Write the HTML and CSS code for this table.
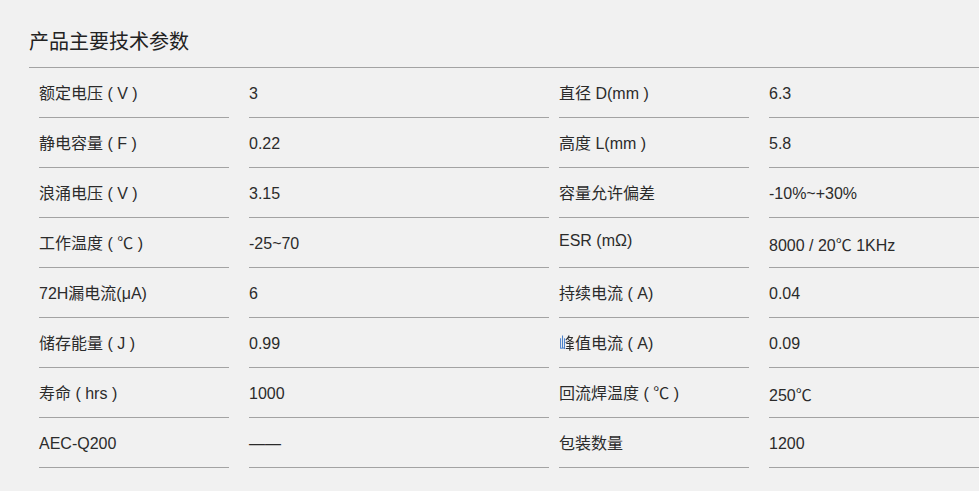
FILE: index.html
```html
<!DOCTYPE html>
<html lang="zh-CN">
<head>
<meta charset="utf-8">
<title>产品主要技术参数</title>
<link rel="stylesheet" href="styles.css">
</head>
<body>
<div class="panel">
  <h2 class="title">产品主要技术参数</h2>
  <div class="specs">
    <div class="k">额定电压 ( V )</div><div class="v">3</div>
    <div class="k">直径 D(mm )</div><div class="v">6.3</div>

    <div class="k">静电容量 ( F )</div><div class="v">0.22</div>
    <div class="k">高度 L(mm )</div><div class="v">5.8</div>

    <div class="k">浪涌电压 ( V )</div><div class="v">3.15</div>
    <div class="k">容量允许偏差</div><div class="v">-10%~+30%</div>

    <div class="k">工作温度 ( ℃ )</div><div class="v">-25~70</div>
    <div class="k high">ESR (mΩ)</div><div class="v low">8000 / 20℃ 1KHz</div>

    <div class="k">72H漏电流(μA)</div><div class="v">6</div>
    <div class="k">持续电流 ( A)</div><div class="v">0.04</div>

    <div class="k">储存能量 ( J )</div><div class="v">0.99</div>
    <div class="k"><span class="tint">峰</span>值电流 ( A)</div><div class="v">0.09</div>

    <div class="k">寿命 ( hrs )</div><div class="v">1000</div>
    <div class="k">回流焊温度 ( ℃ )</div><div class="v low">250℃</div>

    <div class="k">AEC-Q200</div><div class="v">——</div>
    <div class="k">包装数量</div><div class="v">1200</div>
  </div>
</div>
</body>
</html>
```

FILE: styles.css
```css
html, body {
  margin: 0;
  padding: 0;
  background: #f1f1f1;
}

body {
  font-family: "Liberation Sans", Arial, "Noto Sans CJK SC", sans-serif;
  color: #2b2b2b;
}

.panel {
  margin-left: 29px;
  padding-top: 28px;
}

.title {
  margin: 0;
  font-size: 20px;
  font-weight: normal;
  line-height: 28px;
  padding-bottom: 11px;
  border-bottom: 1px solid #a3a3a3;
  color: #222;
}

.specs {
  display: grid;
  grid-template-columns: 200px 320px 200px minmax(0, 1fr);
}

.k, .v {
  font-size: 16px;
  line-height: 20px;
  height: 20px;
  padding-top: 16px;
  padding-bottom: 13px;
  border-bottom: 1px solid #a3a3a3;
  white-space: nowrap;
}

.k { margin-left: 10px; }
.v { margin-left: 20px; }

.k.high {
  padding-top: 13px;
  padding-bottom: 16px;
}

.v.low {
  padding-top: 18px;
  padding-bottom: 11px;
}

.tint {
  background: linear-gradient(to right, #3f78c8 0, #3f78c8 42%, #2b2b2b 42%, #2b2b2b 100%);
  -webkit-background-clip: text;
  background-clip: text;
  color: transparent;
}
```
